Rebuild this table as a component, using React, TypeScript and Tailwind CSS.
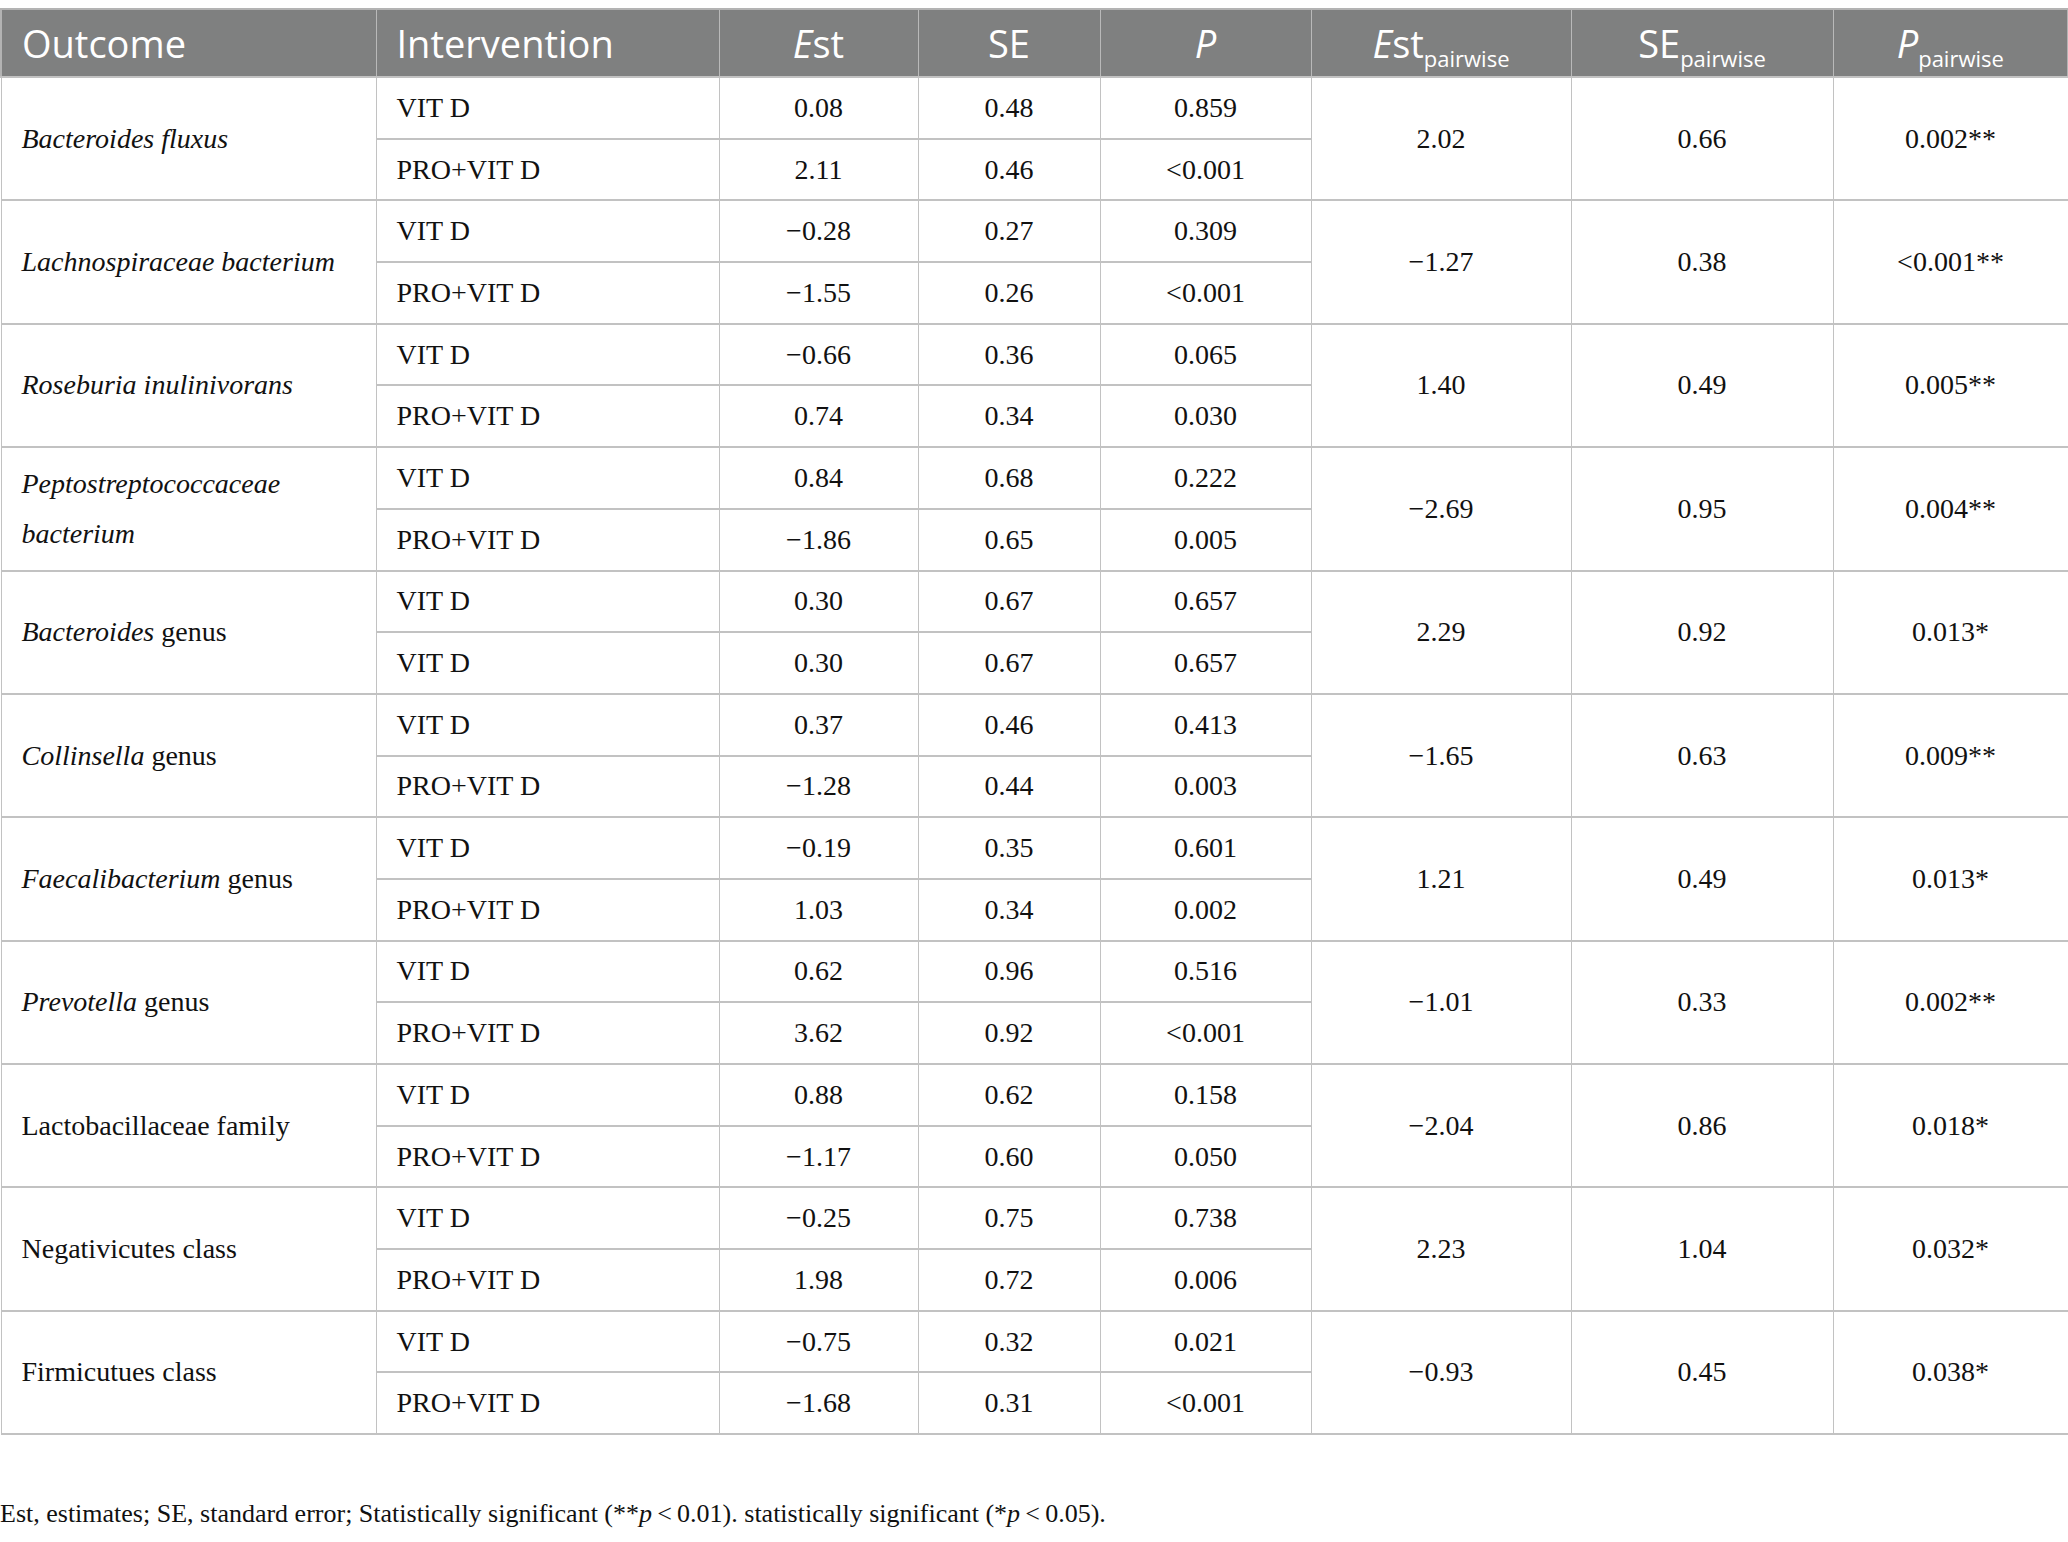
import React from "react";

type Group = {
  outcome: React.ReactNode;
  rows: [string, string, string, string][];
  pair: [string, string, string];
};

const groups: Group[] = [
  {
    outcome: <i>Bacteroides fluxus</i>,
    rows: [
      ["VIT D", "0.08", "0.48", "0.859"],
      ["PRO+VIT D", "2.11", "0.46", "<0.001"],
    ],
    pair: ["2.02", "0.66", "0.002**"],
  },
  {
    outcome: <i>Lachnospiraceae bacterium</i>,
    rows: [
      ["VIT D", "−0.28", "0.27", "0.309"],
      ["PRO+VIT D", "−1.55", "0.26", "<0.001"],
    ],
    pair: ["−1.27", "0.38", "<0.001**"],
  },
  {
    outcome: <i>Roseburia inulinivorans</i>,
    rows: [
      ["VIT D", "−0.66", "0.36", "0.065"],
      ["PRO+VIT D", "0.74", "0.34", "0.030"],
    ],
    pair: ["1.40", "0.49", "0.005**"],
  },
  {
    outcome: <i>Peptostreptococcaceae bacterium</i>,
    rows: [
      ["VIT D", "0.84", "0.68", "0.222"],
      ["PRO+VIT D", "−1.86", "0.65", "0.005"],
    ],
    pair: ["−2.69", "0.95", "0.004**"],
  },
  {
    outcome: (
      <>
        <i>Bacteroides</i> genus
      </>
    ),
    rows: [
      ["VIT D", "0.30", "0.67", "0.657"],
      ["VIT D", "0.30", "0.67", "0.657"],
    ],
    pair: ["2.29", "0.92", "0.013*"],
  },
  {
    outcome: (
      <>
        <i>Collinsella</i> genus
      </>
    ),
    rows: [
      ["VIT D", "0.37", "0.46", "0.413"],
      ["PRO+VIT D", "−1.28", "0.44", "0.003"],
    ],
    pair: ["−1.65", "0.63", "0.009**"],
  },
  {
    outcome: (
      <>
        <i>Faecalibacterium</i> genus
      </>
    ),
    rows: [
      ["VIT D", "−0.19", "0.35", "0.601"],
      ["PRO+VIT D", "1.03", "0.34", "0.002"],
    ],
    pair: ["1.21", "0.49", "0.013*"],
  },
  {
    outcome: (
      <>
        <i>Prevotella</i> genus
      </>
    ),
    rows: [
      ["VIT D", "0.62", "0.96", "0.516"],
      ["PRO+VIT D", "3.62", "0.92", "<0.001"],
    ],
    pair: ["−1.01", "0.33", "0.002**"],
  },
  {
    outcome: "Lactobacillaceae family",
    rows: [
      ["VIT D", "0.88", "0.62", "0.158"],
      ["PRO+VIT D", "−1.17", "0.60", "0.050"],
    ],
    pair: ["−2.04", "0.86", "0.018*"],
  },
  {
    outcome: "Negativicutes class",
    rows: [
      ["VIT D", "−0.25", "0.75", "0.738"],
      ["PRO+VIT D", "1.98", "0.72", "0.006"],
    ],
    pair: ["2.23", "1.04", "0.032*"],
  },
  {
    outcome: "Firmicutues class",
    rows: [
      ["VIT D", "−0.75", "0.32", "0.021"],
      ["PRO+VIT D", "−1.68", "0.31", "<0.001"],
    ],
    pair: ["−0.93", "0.45", "0.038*"],
  },
];

const Sub = ({ children }: { children: React.ReactNode }) => (
  <span className="relative top-[9px] text-[22px]">{children}</span>
);

const th = "border-x border-[#b9b9b9] font-normal px-5";
const td = "border border-[#c2c2c2] border-y-2 text-center align-middle";

const App = () => {
  return (
    <div className="bg-white w-[2068px] min-h-[1542px] pt-2 text-[#111]">
      <table
        className="table-fixed border-collapse w-[2067px] font-['Liberation_Serif',serif] text-[28px]"
        style={{ borderSpacing: 0 }}>
        <colgroup>
          <col className="w-[375px]" />
          <col className="w-[343px]" />
          <col className="w-[199px]" />
          <col className="w-[182px]" />
          <col className="w-[211px]" />
          <col className="w-[260px]" />
          <col className="w-[262px]" />
          <col className="w-[235px]" />
        </colgroup>
        <thead>
          <tr className="h-[68px] bg-[#7f8080] text-white font-['Open_Sans',sans-serif] text-[38px] border-2 border-[#b3b3b3]">
            <th className={`${th} text-left`}>Outcome</th>
            <th className={`${th} text-left`}>Intervention</th>
            <th className={th}>
              <i>E</i>st
            </th>
            <th className={th}>SE</th>
            <th className={th}>
              <i>P</i>
            </th>
            <th className={th}>
              <i>E</i>st
              <Sub>pairwise</Sub>
            </th>
            <th className={th}>
              SE<Sub>pairwise</Sub>
            </th>
            <th className={th}>
              <i>P</i>
              <Sub>pairwise</Sub>
            </th>
          </tr>
        </thead>
        <tbody>
          {groups.map((g, gi) =>
            g.rows.map((r, ri) => (
              <tr key={`${gi}-${ri}`} className="h-[61.7px]">
                {ri === 0 && (
                  <td
                    rowSpan={2}
                    className={`${td} text-left px-5 leading-[50px]`}>
                    {g.outcome}
                  </td>
                )}
                <td className={`${td} text-left px-5`}>{r[0]}</td>
                <td className={td}>{r[1]}</td>
                <td className={td}>{r[2]}</td>
                <td className={td}>{r[3]}</td>
                {ri === 0 &&
                  g.pair.map((v, vi) => (
                    <td key={vi} rowSpan={2} className={td}>
                      {v}
                    </td>
                  ))}
              </tr>
            ))
          )}
        </tbody>
      </table>
      <p className="mt-[60px] font-['Liberation_Serif',serif] text-[26px] leading-[38px]">
        Est, estimates; SE, standard error; Statistically significant (**
        <i>p</i>
        {"\u2009<\u20090.01). statistically significant (*"}
        <i>p</i>
        {"\u2009<\u20090.05)."}
      </p>
    </div>
  );
};

export default App;
